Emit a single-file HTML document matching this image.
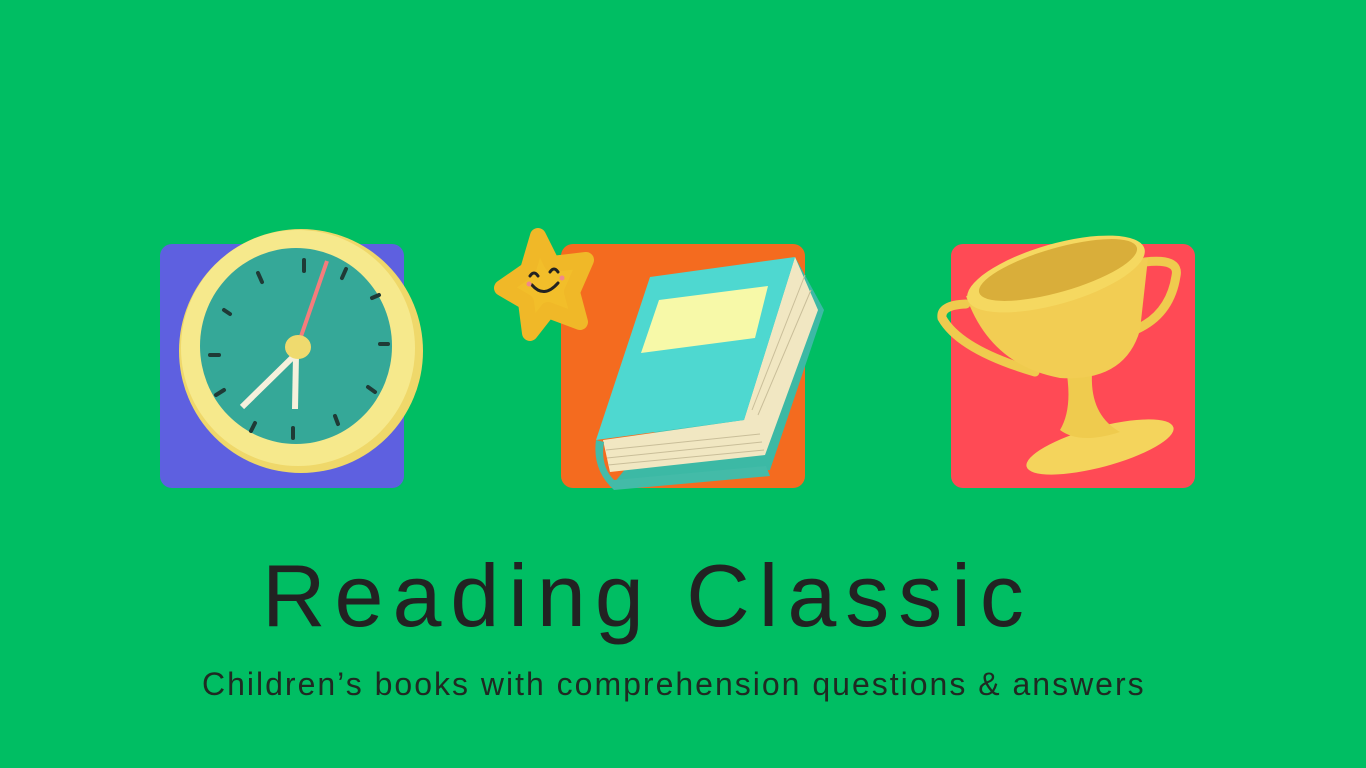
<!DOCTYPE html>
<html><head><style>
html,body{margin:0;padding:0}
body{width:1366px;height:768px;background:#00BE63;position:relative;overflow:hidden;font-family:"Liberation Sans",sans-serif}
.sq{position:absolute;top:244px;width:244px;height:244px;border-radius:12px}
svg{position:absolute;left:0;top:0}
.t{position:absolute;left:0;width:1366px;white-space:nowrap;color:#222}
</style></head><body>
<div class="sq" style="left:160px;background:#5E60E0"></div>
<div class="sq" style="left:561px;background:#F46B1F"></div>
<div class="sq" style="left:951px;background:#FF4A55"></div>
<svg width="1366" height="768" viewBox="0 0 1366 768">
<!-- clock -->
<ellipse cx="301" cy="351" rx="122" ry="122" fill="#EFD86A"/>
<ellipse cx="298" cy="348" rx="117" ry="118" fill="#F6E98C"/>
<ellipse cx="296" cy="346" rx="96" ry="98" fill="#35A898"/>
<g stroke="#1f3a36" stroke-width="4" stroke-linecap="round">
<line x1="304" y1="260" x2="304" y2="271"/><line x1="346" y1="269" x2="342" y2="278"/>
<line x1="372" y1="298" x2="379" y2="295"/><line x1="380" y1="344" x2="388" y2="344"/>
<line x1="368" y1="387" x2="375" y2="392"/><line x1="335" y1="416" x2="338" y2="424"/>
<line x1="293" y1="428" x2="293" y2="438"/><line x1="255" y1="423" x2="251" y2="431"/>
<line x1="216" y1="395" x2="224" y2="390"/><line x1="210" y1="355" x2="219" y2="355"/>
<line x1="224" y1="310" x2="230" y2="314"/><line x1="258" y1="273" x2="262" y2="282"/>
</g>
<line x1="298" y1="345" x2="327" y2="261" stroke="#F57C7C" stroke-width="4"/>
<line x1="295" y1="355" x2="242" y2="407" stroke="#F5F0DC" stroke-width="6"/>
<line x1="296" y1="355" x2="295" y2="409" stroke="#F5F0DC" stroke-width="6"/>
<ellipse cx="298" cy="347" rx="13" ry="12" fill="#EFDA6E"/>
<!-- star -->
<path d="M538 236 L552 264 L586 260 L572 292 L580 322 L548 310 L530 333 L526 302 L502 288 L528 270 Z" fill="#F2BE2A" stroke="#F0B828" stroke-width="16" stroke-linejoin="round"/>
<path d="M530 276 q4 -6 8 0 M550 272 q4 -6 8 0 M532 285 q12 14 26 -2" stroke="#222" stroke-width="3" fill="none" stroke-linecap="round"/>
<circle cx="529" cy="284" r="2.5" fill="#F08A8A"/><circle cx="562" cy="278" r="2.5" fill="#F08A8A"/>
<!-- book -->
<path d="M614 483 L770 470 L824 310 L795 257 Z" fill="#3CB9A5"/>
<path d="M603 440 L610 472 L765 455 L818 310 L795 257 L744 420 Z" fill="#F1E7C2"/>
<g stroke="#C9BE99" stroke-width="1"><line x1="606" y1="450" x2="760" y2="434"/><line x1="607" y1="458" x2="762" y2="442"/><line x1="608" y1="465" x2="764" y2="450"/><line x1="752" y1="410" x2="805" y2="275"/><line x1="758" y1="415" x2="811" y2="290"/></g>
<path d="M596 440 Q592 470 614 490 L770 476 L766 466 L614 480 Q600 466 604 442 Z" fill="#43BBA8"/>
<path d="M650 277 L795 257 L744 420 L596 440 Z" fill="#4ED8D0"/>
<path d="M659 300 L768 286 L755 338 L641 353 Z" fill="#F7F9A8"/>
<!-- trophy -->
<path d="M966 304 Q940 305 942 318 Q960 350 1035 372" stroke="#EFCB4E" stroke-width="9" fill="none" stroke-linecap="round"/>
<path d="M1145 262 Q1180 258 1176 276 Q1170 315 1135 330" stroke="#EFCB4E" stroke-width="9" fill="none" stroke-linecap="round"/>
<ellipse cx="1100" cy="447" rx="76" ry="20" transform="rotate(-15 1100 447)" fill="#F4D45C"/>
<path d="M1067 375 L1092 374 Q1090 415 1120 432 Q1080 445 1060 430 Q1072 410 1067 375 Z" fill="#EFCB4E"/>
<path d="M966 296 Q990 365 1060 378 Q1125 382 1140 330 L1148 258 Z" fill="#F2CD53"/>
<ellipse cx="1056" cy="274" rx="92" ry="30" transform="rotate(-16 1056 274)" fill="#F5D860"/>
<ellipse cx="1058" cy="270" rx="82" ry="22" transform="rotate(-16 1058 270)" fill="#D9AE3A"/>
</svg>
<div class="t" style="top:546px;font-size:88px;line-height:100px;padding-left:262px;letter-spacing:9px">Reading Classic</div>
<div class="t" style="top:664px;font-size:32px;line-height:40px;padding-left:202px;letter-spacing:2px;color:#1f2a22">Children’s books with comprehension questions &amp; answers</div>
</body></html>
